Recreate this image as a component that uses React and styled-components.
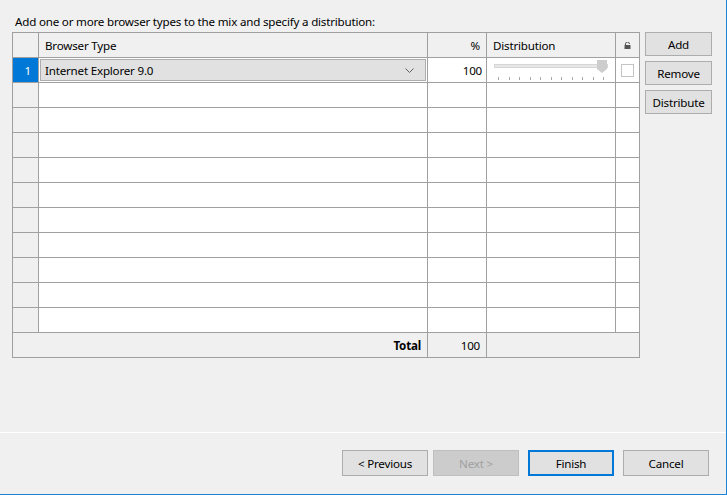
import React from "react";
import styled, { createGlobalStyle, css } from "styled-components";

const GlobalStyle = createGlobalStyle`
    html, body {
        margin: 0;
        padding: 0;
        background: #f0f0f0;
    }
    * {
        box-sizing: border-box;
    }
`;

const LINE = "#a0a0a0";
const FONT = `"Noto Sans", "Liberation Sans", Arial, sans-serif`;

const Window = styled.div`
    width: 727px;
    height: 495px;
    display: flex;
    flex-direction: column;
    background: #f0f0f0;
    border-right: 1px solid #1883d7;
    border-bottom: 1px solid #1883d7;
    font-family: ${FONT};
    font-size: 11.6px;
    letter-spacing: -0.2px;
    color: #000;
`;

const Body = styled.div`
    flex: 1;
    padding: 14px 0 0 12px;
`;

const Caption = styled.div`
    padding-left: 3px;
    height: 18px;
    line-height: 16px;
`;

const Row = styled.div`
    display: flex;
    gap: 5px;
`;

const Grid = styled.div`
    display: grid;
    grid-template-columns: 25px 388px 58px 128px 23px;
    grid-auto-rows: 24px;
    gap: 1px;
    padding: 1px;
    background: ${LINE};
    width: 628px;
`;

const Cell = styled.div`
    display: flex;
    align-items: center;
    background: ${(p) => (p.$head ? "#f0f0f0" : "#fff")};
    padding: 0 6px;
    white-space: nowrap;
    ${(p) => p.$right && css`justify-content: flex-end;`}
    ${(p) => p.$center && css`justify-content: center; padding: 0;`}
    ${(p) => p.$span && css`grid-column: span ${p.$span};`}
    ${(p) => p.$bold && css`font-weight: bold;`}
`;

const RowHead = styled(Cell)`
    background: ${(p) => (p.$active ? "#0078d7" : "#f0f0f0")};
    color: #fff;
    justify-content: flex-end;
    padding: 0 7px 0 0;
`;

const ComboCell = styled(Cell)`
    padding: 1px;
`;

const Combo = styled.div`
    flex: 1;
    align-self: stretch;
    display: flex;
    align-items: center;
    justify-content: space-between;
    background: #e1e1e1;
    border: 1px solid #adadad;
    padding: 0 11px 0 4px;
`;

const Check = styled.div`
    width: 13px;
    height: 13px;
    border: 1px solid #c4c4c4;
    background: #fff;
`;

const SliderCell = styled(Cell)`
    padding: 0 0 0 6px;
    align-items: flex-start;
`;

const SideButtons = styled.div`
    display: flex;
    flex-direction: column;
    gap: 5px;
`;

const Button = styled.button`
    font-family: ${FONT};
    font-size: 11.6px;
    letter-spacing: -0.2px;
    background: #e1e1e1;
    border: 1px solid #adadad;
    color: #000;
    padding: 0;
    ${(p) =>
        p.$side &&
        css`
            width: 67px;
            height: 24px;
        `}
    ${(p) =>
        p.$nav &&
        css`
            width: 86px;
            height: 26px;
        `}
    ${(p) =>
        p.$primary &&
        css`
            border: 2px solid #0078d7;
        `}
    &:disabled {
        background: #cccccc;
        border-color: #bfbfbf;
        color: #a0a0a0;
    }
`;

const Footer = styled.div`
    height: 62px;
    border-top: 1px solid #ffffff;
    display: flex;
    justify-content: flex-end;
    align-items: flex-start;
    padding: 17px 17px 0 0;
`;

const NavGroup = styled.div`
    display: flex;
    gap: 5px;
    margin-right: 9px;
`;

const Lock = () => (
    <svg width="7" height="7" viewBox="0 0 7 7">
        <path d="M1.5 3V2a2 2 0 0 1 4 0" fill="none" stroke="#555" strokeWidth="1" />
        <rect x="0.5" y="3" width="6" height="4" fill="#555" />
    </svg>
);

const Chevron = () => (
    <svg width="9" height="5" viewBox="0 0 9 5">
        <polyline points="0.5,0.5 4.5,4.5 8.5,0.5" fill="none" stroke="#606060" strokeWidth="1" />
    </svg>
);

const Slider = () => {
    const ticks = Array.from({ length: 11 }, (_, i) => 5 + i * 10.5);
    return (
        <svg width="122" height="23" viewBox="0 0 122 23">
            <rect x="1.5" y="6.5" width="113" height="3" fill="#e7e7e7" stroke="#d6d6d6" />
            <path d="M104 2h10v9l-5 4l-5-4z" fill="#cdcdcd" />
            {ticks.map((x) => (
                <rect key={x} x={Math.round(x)} y="19" width="1" height="3" fill="#a8a8a8" />
            ))}
        </svg>
    );
};

const EMPTY_ROWS = 10;

export default function App() {
    return (
        <Window>
            <GlobalStyle />
            <Body>
                <Caption>Add one or more browser types to the mix and specify a distribution:</Caption>
                <Row>
                    <Grid>
                        <Cell $head />
                        <Cell $head>Browser Type</Cell>
                        <Cell $head $right>%</Cell>
                        <Cell $head>Distribution</Cell>
                        <Cell $head $center>
                            <Lock />
                        </Cell>

                        <RowHead $active>1</RowHead>
                        <ComboCell>
                            <Combo>
                                <span>Internet Explorer 9.0</span>
                                <Chevron />
                            </Combo>
                        </ComboCell>
                        <Cell $right style={{ paddingRight: 4 }}>100</Cell>
                        <SliderCell>
                            <Slider />
                        </SliderCell>
                        <Cell $center>
                            <Check />
                        </Cell>

                        {Array.from({ length: EMPTY_ROWS }, (_, i) => (
                            <React.Fragment key={i}>
                                <RowHead />
                                <Cell />
                                <Cell />
                                <Cell />
                                <Cell />
                            </React.Fragment>
                        ))}

                        <Cell $head $span={2} $right $bold>Total</Cell>
                        <Cell $head $right>100</Cell>
                        <Cell $head $span={2} />
                    </Grid>
                    <SideButtons>
                        <Button $side>Add</Button>
                        <Button $side>Remove</Button>
                        <Button $side>Distribute</Button>
                    </SideButtons>
                </Row>
            </Body>
            <Footer>
                <NavGroup>
                    <Button $nav>&lt; Previous</Button>
                    <Button $nav disabled>Next &gt;</Button>
                </NavGroup>
                <NavGroup>
                    <Button $nav $primary>Finish</Button>
                </NavGroup>
                <Button $nav>Cancel</Button>
            </Footer>
        </Window>
    );
}
